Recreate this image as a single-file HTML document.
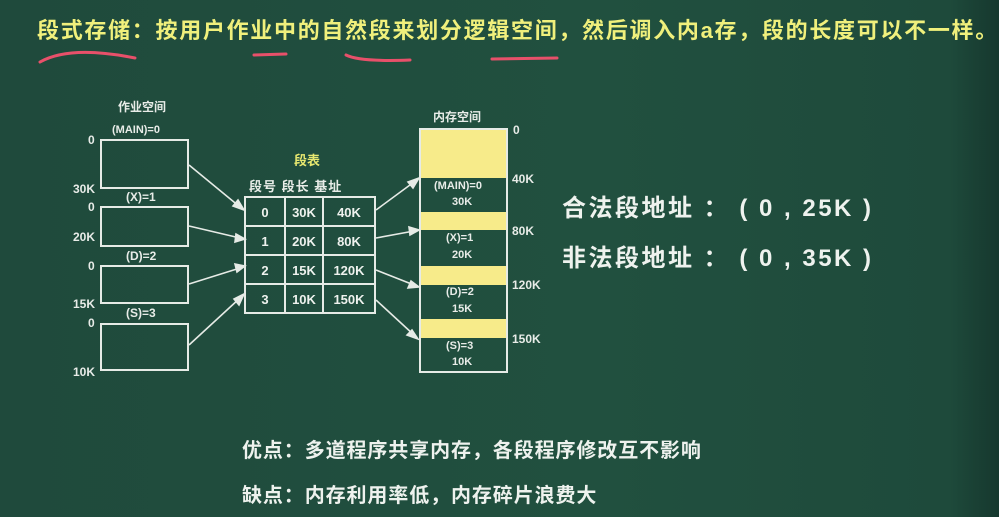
<!DOCTYPE html>
<html><head><meta charset="utf-8"><style>
body{margin:0;width:999px;height:517px;overflow:hidden;background:linear-gradient(90deg,#1f4a3c 0%,#21503f 60%,#1e4a3b 95%,#16382e 100%);font-family:"Liberation Sans","Noto Sans CJK SC",sans-serif;position:relative}
.a{position:absolute;white-space:nowrap}
.w{color:#eef2ee}
.s{font-size:12px;font-weight:bold;color:#e8ece8}
.box{position:absolute;border:2px solid #e6ebe6;box-sizing:border-box}
</style></head><body>
<div class="a" style="left:37px;top:13px;font-size:22px;font-weight:bold;color:#f0f07c;letter-spacing:1.7px">段式存储：按用户作业中的自然段来划分逻辑空间，然后调入内a存，段的长度可以不一样。</div>
<svg class="a" style="left:0;top:0" width="999" height="517">
<g stroke="#e8506a" stroke-width="3" fill="none" stroke-linecap="round">
<path d="M40 62 Q70 45 135 58"/><path d="M254 55 L286 54"/><path d="M346 55 Q360 62 410 60"/><path d="M492 59 L557 58"/>
</g>
<g stroke="#e6ebe6" stroke-width="1.6" fill="#e6ebe6">
<line x1="189" y1="165" x2="240" y2="207"/><polygon points="244,210 233,206 238,200"/>
<line x1="189" y1="226" x2="240" y2="238"/><polygon points="245,239 235,242 236,234"/>
<line x1="189" y1="284" x2="240" y2="268"/><polygon points="245,266 237,272 235,264"/>
<line x1="189" y1="345" x2="240" y2="298"/><polygon points="244,294 239,305 234,299"/>
<line x1="376" y1="210" x2="414" y2="182"/><polygon points="419,178 413,188 408,182"/>
<line x1="376" y1="238" x2="414" y2="231"/><polygon points="419,230 410,235 409,227"/>
<line x1="376" y1="270" x2="414" y2="285"/><polygon points="419,287 408,288 411,281"/>
<line x1="376" y1="300" x2="414" y2="335"/><polygon points="418,339 407,335 412,330"/>
</g>
</svg>
<div class="a s" style="left:118px;top:98px">作业空间</div>
<div class="a s" style="left:112px;top:124px;font-size:11px">(MAIN)=0</div>
<div class="box" style="left:100px;top:139px;width:89px;height:50px"></div>
<div class="box" style="left:100px;top:206px;width:89px;height:41px"></div>
<div class="box" style="left:100px;top:265px;width:89px;height:39px"></div>
<div class="box" style="left:100px;top:323px;width:89px;height:48px"></div>
<div class="a s" style="left:88px;top:133px">0</div><div class="a s" style="left:73px;top:182px">30K</div>
<div class="a s" style="left:126px;top:190px">(X)=1</div>
<div class="a s" style="left:88px;top:200px">0</div><div class="a s" style="left:73px;top:230px">20K</div>
<div class="a s" style="left:126px;top:249px">(D)=2</div>
<div class="a s" style="left:88px;top:259px">0</div><div class="a s" style="left:73px;top:297px">15K</div>
<div class="a s" style="left:126px;top:306px">(S)=3</div>
<div class="a s" style="left:88px;top:316px">0</div><div class="a s" style="left:73px;top:365px">10K</div>
<div class="a s" style="left:294px;top:150px;color:#e8e870;font-size:13px">段表</div>
<div class="a s" style="left:249px;top:176px;font-size:13px;letter-spacing:1px">段号 段长 基址</div>
<svg class="a" style="left:244px;top:196px" width="134" height="120">
<g stroke="#e6ebe6" stroke-width="2" fill="none">
<rect x="1" y="1" width="130" height="116"/><line x1="41" y1="0" x2="41" y2="118"/><line x1="79" y1="0" x2="79" y2="118"/>
<line x1="0" y1="30" x2="132" y2="30"/><line x1="0" y1="59" x2="132" y2="59"/><line x1="0" y1="88" x2="132" y2="88"/>
</g>
<g fill="#eef2ee" font-family="Liberation Sans" font-weight="bold" font-size="13" text-anchor="middle">
<text x="21" y="21">0</text><text x="60" y="21">30K</text><text x="105" y="21">40K</text>
<text x="21" y="50">1</text><text x="60" y="50">20K</text><text x="105" y="50">80K</text>
<text x="21" y="79">2</text><text x="60" y="79">15K</text><text x="105" y="79">120K</text>
<text x="21" y="108">3</text><text x="60" y="108">10K</text><text x="105" y="108">150K</text>
</g></svg>
<div class="a s" style="left:433px;top:108px">内存空间</div>
<div class="box" style="left:419px;top:128px;width:89px;height:245px"></div>
<div class="a" style="left:421px;top:130px;width:85px;height:48px;background:#f7eb8a"></div>
<div class="a" style="left:421px;top:212px;width:85px;height:18px;background:#f7eb8a"></div>
<div class="a" style="left:421px;top:266px;width:85px;height:19px;background:#f7eb8a"></div>
<div class="a" style="left:421px;top:319px;width:85px;height:19px;background:#f7eb8a"></div>
<div class="a s" style="left:434px;top:180px;font-size:11px">(MAIN)=0</div><div class="a s" style="left:452px;top:196px;font-size:11px">30K</div>
<div class="a s" style="left:446px;top:232px;font-size:11px">(X)=1</div><div class="a s" style="left:452px;top:249px;font-size:11px">20K</div>
<div class="a s" style="left:446px;top:286px;font-size:11px">(D)=2</div><div class="a s" style="left:452px;top:303px;font-size:11px">15K</div>
<div class="a s" style="left:446px;top:340px;font-size:11px">(S)=3</div><div class="a s" style="left:452px;top:356px;font-size:11px">10K</div>
<div class="a s" style="left:513px;top:123px">0</div>
<div class="a s" style="left:512px;top:172px">40K</div>
<div class="a s" style="left:512px;top:224px">80K</div>
<div class="a s" style="left:512px;top:278px">120K</div>
<div class="a s" style="left:512px;top:332px">150K</div>
<div class="a w" style="left:562px;top:188px;font-size:24px;font-weight:bold;letter-spacing:2.5px">合法段地址 ： ( 0 , 25K )</div>
<div class="a w" style="left:562px;top:238px;font-size:24px;font-weight:bold;letter-spacing:2.5px">非法段地址 ： ( 0 , 35K )</div>
<div class="a w" style="left:242px;top:434px;font-size:20px;font-weight:bold;letter-spacing:0.9px">优点：多道程序共享内存，各段程序修改互不影响</div>
<div class="a w" style="left:242px;top:479px;font-size:20px;font-weight:bold;letter-spacing:0.9px">缺点：内存利用率低，内存碎片浪费大</div>
</body></html>
